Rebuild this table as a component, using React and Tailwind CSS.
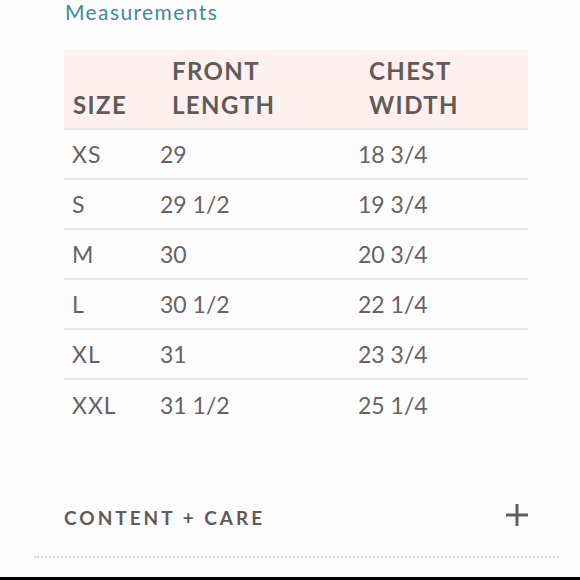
const rows = [
  ["XS", "29", "18 3/4"],
  ["S", "29 1/2", "19 3/4"],
  ["M", "30", "20 3/4"],
  ["L", "30 1/2", "22 1/4"],
  ["XL", "31", "23 3/4"],
  ["XXL", "31 1/2", "25 1/4"],
];

export default function App() {
  return (
    <div
      className="w-[580px] h-[580px] bg-[#fdfcfd] flex flex-col overflow-hidden"
      style={{ fontFamily: "Lato, 'Open Sans', sans-serif" }}
    >
      {/* title */}
      <div className="pl-[65px] pt-[1px] h-[23px] leading-[21px] text-[21px] tracking-[1.4px] text-[#3f8c90]">
        Measurements
      </div>

      {/* size chart */}
      <div className="mt-[27px] ml-[64px] w-[464px]">
        <div className="grid grid-cols-[88px_198px_178px] h-[80px] bg-[#fdf0ee] border-b-2 border-[#e9e7e9] text-[24px] font-bold tracking-[1.4px] text-[#5f5b5b] leading-[34px] pb-[6px] items-end">
          <div className="pl-[9px]">SIZE</div>
          <div className="pl-[20px]">FRONT<br />LENGTH</div>
          <div className="pl-[19px]">CHEST<br />WIDTH</div>
        </div>
        {rows.map((r, i) => (
          <div
            key={r[0]}
            className={
              "grid grid-cols-[88px_198px_178px] h-[50px] items-center text-[23px] text-[#676363] " +
              (i < rows.length - 1 ? "border-b-2 border-[#e9e7e9]" : "")
            }
          >
            <div className="pl-[8px] tracking-[1px]">{r[0]}</div>
            <div className="pl-[8px]">{r[1]}</div>
            <div className="pl-[8px]">{r[2]}</div>
          </div>
        ))}
      </div>

      {/* content + care */}
      <div className="mt-[73px] ml-[64px] w-[465px] flex items-center justify-between h-[30px]">
        <span className="text-[19px] font-bold tracking-[3px] text-[#5f5b5b]">
          CONTENT + CARE
        </span>
        <svg width="22" height="22" viewBox="0 0 22 22" className="mr-[1px] -mt-[6px]">
          <path d="M11 0v22M0 11h22" stroke="#625e5e" strokeWidth="3" />
        </svg>
      </div>

      <div className="mt-[23px] ml-[34px] w-[525px] border-t-2 border-dotted border-[#d9d7d9]" />

      <div className="mt-auto h-[3px] bg-black" />
    </div>
  );
}
